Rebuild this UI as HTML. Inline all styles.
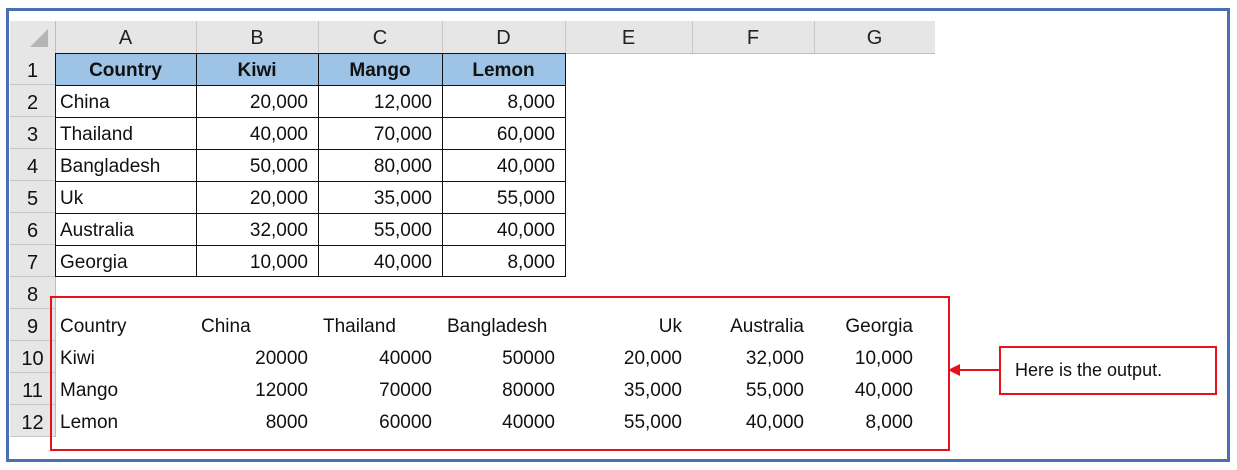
<!DOCTYPE html>
<html><head><style>
body{margin:0;width:1237px;height:470px;background:#fff;position:relative;overflow:hidden;font-family:"Liberation Sans",sans-serif;color:#111}
.a{position:absolute;white-space:nowrap;font-size:19px;line-height:32px;padding-top:2px}
.r{text-align:right}
.c{text-align:center}
</style></head><body>
<div style="position:absolute;left:6px;top:8px;width:1218px;height:448px;border:3px solid #4a70b4"></div>
<div style="position:absolute;left:10px;top:21px;width:925px;height:32px;background:#e6e6e6;border-bottom:1px solid #bdbdbd"></div>
<div style="position:absolute;left:10px;top:21px;width:45px;height:416px;background:#e6e6e6;border-right:1px solid #bdbdbd"></div>
<svg style="position:absolute;left:28px;top:27px" width="22" height="22"><polygon points="20,2 20,20 2,20" fill="#b5b5b5"/></svg>
<div id="g"></div>
<script>
var cols=[55,196,318,442,565,692,814,935],L="ABCDEFG",h="";
for(var i=0;i<7;i++){h+='<div class="a c" style="left:'+cols[i]+'px;top:20px;width:'+(cols[i+1]-cols[i])+'px;color:#222;font-size:20px">'+L[i]+'</div>';
if(i>0)h+='<div style="position:absolute;left:'+cols[i]+'px;top:21px;width:1px;height:32px;background:#c8c8c8"></div>';}
for(var r=1;r<=12;r++){var y=53+(r-1)*32;h+='<div class="a c" style="left:10px;top:'+y+'px;width:45px;color:#111;font-size:20px">'+r+'</div><div style="position:absolute;left:10px;top:'+(y+31)+'px;width:45px;height:1px;background:#c8c8c8"></div>';}
h+='<div style="position:absolute;left:55px;top:53px;width:510px;height:32px;background:#9dc3e6"></div>';
var d=[["Country","Kiwi","Mango","Lemon"],["China","20,000","12,000","8,000"],["Thailand","40,000","70,000","60,000"],["Bangladesh","50,000","80,000","40,000"],["Uk","20,000","35,000","55,000"],["Australia","32,000","55,000","40,000"],["Georgia","10,000","40,000","8,000"]];
for(var r=0;r<7;r++){var y=53+r*32;for(var c=0;c<4;c++){var x=cols[c],w=cols[c+1]-cols[c];
if(r==0)h+='<div class="a c" style="left:'+x+'px;top:'+y+'px;width:'+w+'px;font-weight:bold">'+d[r][c]+'</div>';
else if(c==0)h+='<div class="a" style="left:'+(x+5)+'px;top:'+y+'px">'+d[r][c]+'</div>';
else h+='<div class="a r" style="left:'+x+'px;top:'+y+'px;width:'+(w-10)+'px">'+d[r][c]+'</div>';}
h+='<div style="position:absolute;left:55px;top:'+y+'px;width:510px;height:1px;background:#111"></div>';}
h+='<div style="position:absolute;left:55px;top:276px;width:511px;height:1px;background:#111"></div>';
for(var c=0;c<5;c++)h+='<div style="position:absolute;left:'+cols[c]+'px;top:53px;width:1px;height:224px;background:#111"></div>';
var o=[["Country","China","Thailand","Bangladesh","Uk","Australia","Georgia"],["Kiwi","20000","40000","50000","20,000","32,000","10,000"],["Mango","12000","70000","80000","35,000","55,000","40,000"],["Lemon","8000","60000","40000","55,000","40,000","8,000"]];
for(var r=0;r<4;r++){var y=309+r*32;for(var c=0;c<7;c++){var x=cols[c],w=cols[c+1]-cols[c];
var pad=(c==6)?22:10;
if(c==0||(r==0&&c<4))h+='<div class="a" style="left:'+(x+5)+'px;top:'+y+'px">'+o[r][c]+'</div>';
else h+='<div class="a r" style="left:'+x+'px;top:'+y+'px;width:'+(w-pad)+'px">'+o[r][c]+'</div>';}}
document.getElementById('g').outerHTML=h;
</script>
<div style="position:absolute;left:50px;top:296px;width:896px;height:151px;border:2px solid #e8101a"></div>
<div style="position:absolute;left:999px;top:346px;width:214px;height:45px;border:2px solid #e8101a"></div>
<div class="a" style="left:1015px;top:352px;font-size:18px">Here is the output.</div>
<div style="position:absolute;left:955px;top:369px;width:44px;height:2px;background:#e8101a"></div>
<svg style="position:absolute;left:948px;top:364px" width="14" height="12"><polygon points="0,6 12,0 12,12" fill="#e8101a"/></svg>
</body></html>
